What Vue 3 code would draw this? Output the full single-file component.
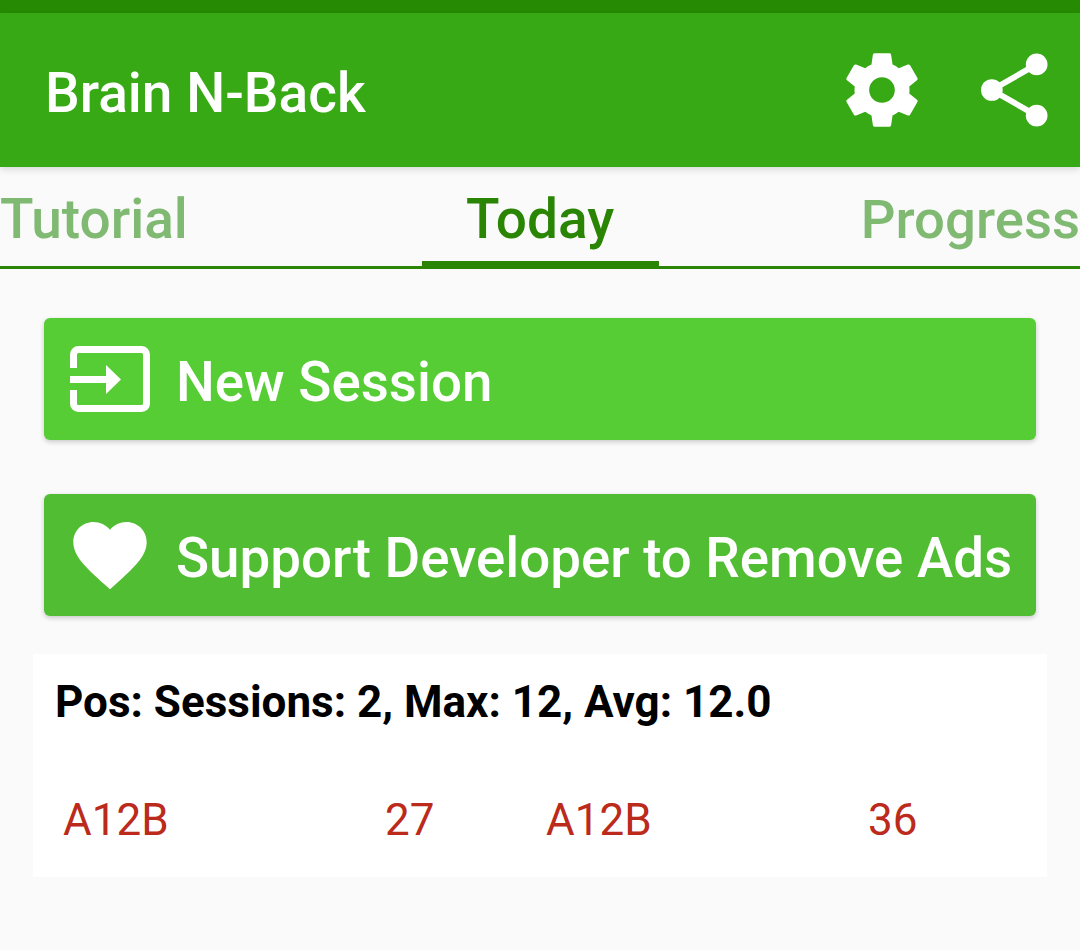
<script setup>
const tabs = [
  { label: 'Tutorial', cls: 'tab-left' },
  { label: 'Today', cls: 'tab-mid active' },
  { label: 'Progress', cls: 'tab-right' }
];

const scores = [
  { label: 'A12B', value: 27 },
  { label: 'A12B', value: 36 }
];
</script>

<template>
  <div class="screen">
    <div class="status-bar"></div>
    <header class="toolbar">
      <h1 class="title">Brain N-Back</h1>
      <div class="actions">
        <svg class="gear" viewBox="0 0 24 24" fill="#fff">
          <path d="M19.43 12.98c.04-.32.07-.64.07-.98s-.03-.66-.07-.98l2.11-1.65c.19-.15.24-.42.12-.64l-2-3.46c-.12-.22-.39-.3-.61-.22l-2.49 1c-.52-.4-1.08-.73-1.69-.98l-.38-2.65C14.46 2.18 14.25 2 14 2h-4c-.25 0-.46.18-.49.42l-.38 2.65c-.61.25-1.17.59-1.69.98l-2.49-1c-.23-.09-.49 0-.61.22l-2 3.46c-.13.22-.07.49.12.64l2.11 1.65c-.04.32-.07.65-.07.98s.03.66.07.98l-2.11 1.65c-.19.15-.24.42-.12.64l2 3.46c.12.22.39.3.61.22l2.49-1c.52.4 1.08.73 1.69.98l.38 2.65c.03.24.24.42.49.42h4c.25 0 .46-.18.49-.42l.38-2.65c.61-.25 1.17-.59 1.69-.98l2.49 1c.23.09.49 0 .61-.22l2-3.46c.12-.22.07-.49-.12-.64l-2.11-1.65zM12 15.5c-1.93 0-3.5-1.57-3.5-3.5s1.57-3.5 3.5-3.5 3.5 1.57 3.5 3.5-1.57 3.5-3.5 3.5z"/>
        </svg>
        <svg class="share" viewBox="0 0 68 74" fill="#fff">
          <circle cx="11" cy="37" r="11"/>
          <circle cx="56.500" cy="11" r="11"/>
          <circle cx="56.500" cy="63" r="11"/>
          <path d="M11 37 56.500 11M11 37 56.500 63" stroke="#fff" stroke-width="6" fill="none"/>
        </svg>
      </div>
    </header>

    <nav class="tabs">
      <div v-for="tab in tabs" :key="tab.label" class="tab" :class="tab.cls">{{ tab.label }}</div>
    </nav>

    <main class="content">
      <button class="btn btn-new">
        <svg class="btn-icon" viewBox="0 0 80 66" fill="none">
          <path d="M3.500 22V8.500a5 5 0 0 1 5-5h63a5 5 0 0 1 5 5v49a5 5 0 0 1-5 5h-63a5 5 0 0 1-5-5V44" stroke="#fff" stroke-width="7"/>
          <path d="M0 30h36V19l15 14.500L36 48V37H0z" fill="#fff"/>
        </svg>
        <span>New Session</span>
      </button>
      <button class="btn btn-support">
        <svg class="btn-icon" viewBox="0 0 24 24" fill="#fff">
          <path d="M12 21.350l-1.450-1.320C5.400 15.360 2 12.280 2 8.500 2 5.420 4.420 3 7.500 3c1.740 0 3.410.81 4.500 2.090C13.090 3.810 14.760 3 16.500 3 19.580 3 22 5.420 22 8.500c0 3.780-3.400 6.860-8.550 11.540L12 21.350z"/>
        </svg>
        <span>Support Developer to Remove Ads</span>
      </button>

      <section class="card">
        <p class="summary">Pos: Sessions: 2, Max: 12, Avg: 12.0</p>
        <div class="scores">
          <template v-for="(score, i) in scores" :key="i">
            <span>{{ score.label }}</span>
            <span>{{ score.value }}</span>
          </template>
        </div>
      </section>
    </main>
  </div>
</template>

<style>
body {
  background: #fafafa;
}
</style>

<style scoped>
.screen {
  width: 1080px;
  height: 950px;
  overflow: hidden;
  background: #fafafa;
  font-family: Roboto, "Liberation Sans", sans-serif;
}

.status-bar {
  height: 13px;
  background: #268a03;
}

.toolbar {
  height: 154px;
  box-sizing: border-box;
  padding: 0 32px 0 45px;
  display: flex;
  align-items: center;
  justify-content: space-between;
  background: #36a915;
  box-shadow: 0 3px 6px rgba(0, 0, 0, 0.12);
  position: relative;
}

.title {
  margin: 6px 0 0;
  color: #fff;
  font-size: 55px;
  font-weight: 500;
  line-height: 1;
}

.actions {
  display: flex;
  align-items: center;
  gap: 61px;
}

.gear {
  width: 88px;
  height: 88px;
  margin-right: -6px;
}

.share {
  width: 67px;
  height: 74px;
}

.tabs {
  height: 102px;
  box-sizing: border-box;
  display: grid;
  grid-template-columns: 1fr 237px 1fr;
  border-bottom: 3px solid #2a8504;
}

.tab {
  height: 99px;
  box-sizing: border-box;
  padding-top: 20px;
  font-size: 55px;
  font-weight: 500;
  line-height: 64px;
  color: #7fb972;
  white-space: nowrap;
}

.tab-mid {
  text-align: center;
}

.tab-right {
  font-size: 54.500px;
  text-align: right;
}

.tab.active {
  color: #2a8504;
  border-bottom: 5px solid #2a8504;
}

.content {
  padding: 49px 33px 0;
  display: flex;
  flex-direction: column;
}

.btn {
  width: 992px;
  height: 122px;
  margin: 0 0 54px 11px;
  padding: 0 0 0 26px;
  border: none;
  border-radius: 6px;
  display: flex;
  align-items: center;
  gap: 26px;
  color: #fff;
  font-family: inherit;
  font-size: 54.700px;
  font-weight: 500;
  box-shadow: 0 2px 5px rgba(0, 0, 0, 0.2);
}

.btn span {
  margin-top: 6px;
}

.btn-new {
  background: #56cd35;
}

.btn-support {
  margin-bottom: 38px;
  background: #51bd33;
}

.btn-icon {
  width: 80px;
  height: 66px;
  flex: none;
}

.btn-support .btn-icon {
  width: 88px;
  height: 88px;
  margin: 0 -4px;
}

.card {
  width: 1014px;
  height: 223px;
  box-sizing: border-box;
  padding: 21px 18px 0 22px;
  background: #fff;
}

.summary {
  margin: 0;
  color: #000;
  font-size: 44px;
  font-weight: 700;
  line-height: 54px;
}

.scores {
  margin: 64px 0 0 8px;
  display: grid;
  grid-template-columns: 2fr 1fr 2fr 1fr;
  color: #bb2a1a;
  font-size: 44px;
  line-height: 54px;
}
</style>
